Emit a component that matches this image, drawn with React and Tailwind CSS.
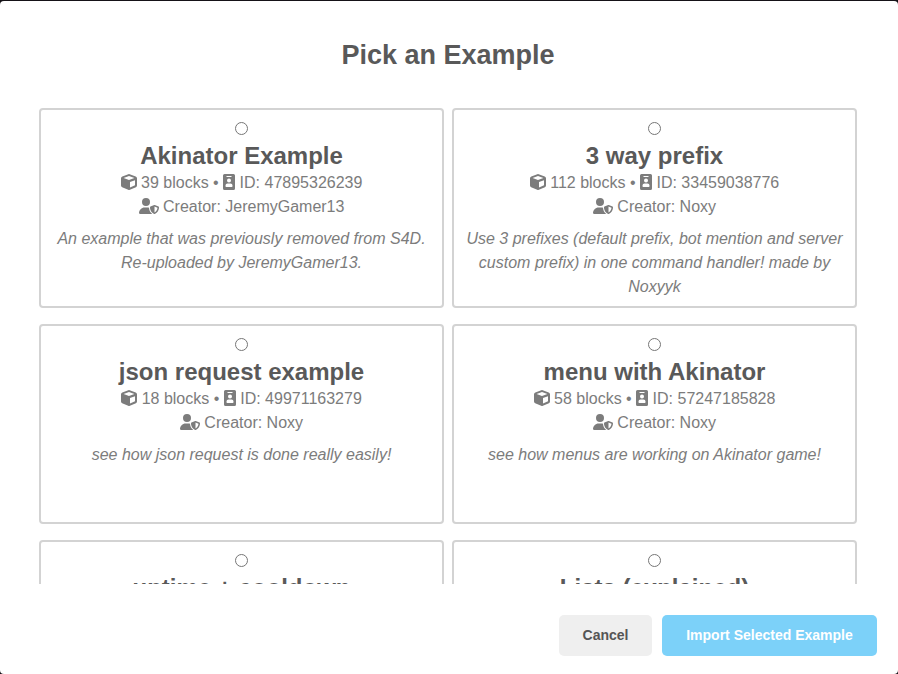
import { FaUserShield } from 'react-icons/fa6';

const examples = [
  { name: 'Akinator Example', blocks: 39, id: '47895326239', creator: 'JeremyGamer13', text: 'An example that was previously removed from S4D. Re-uploaded by JeremyGamer13.' },
  { name: '3 way prefix', blocks: 112, id: '33459038776', creator: 'Noxy', text: 'Use 3 prefixes (default prefix, bot mention and server custom prefix) in one command handler! made by Noxyyk' },
  { name: 'json request example', blocks: 18, id: '49971163279', creator: 'Noxy', text: 'see how json request is done really easily!' },
  { name: 'menu with Akinator', blocks: 58, id: '57247185828', creator: 'Noxy', text: 'see how menus are working on Akinator game!' },
  { name: 'uptime + cooldown' },
  { name: 'Lists (explained)' },
];

// Solid box with a light front-right face
function CubeIcon() {
  return (
    <svg viewBox="0 0 16 16" className="mb-0.5 h-4 w-4 shrink-0" fill="currentColor">
      <path fillRule="evenodd" d="M7.3.2a2 2 0 0 1 1.4 0l6 2.2A2 2 0 0 1 16 4.3v7.2a2 2 0 0 1-1.1 1.8l-6 2.5a2 2 0 0 1-1.7 0l-6-2.5A2 2 0 0 1 0 11.5V4.3a2 2 0 0 1 1.3-1.9zM8 2.1 2.6 4.1 8 6.1l5.4-2zM9 13.6l5-2.3V6.2L9 8z" />
    </svg>
  );
}

// Badge with a clip slot and a person cut out
function IdIcon() {
  return (
    <svg viewBox="0 0 12 16" className="mb-0.5 h-4 w-3 shrink-0" fill="currentColor">
      <path fillRule="evenodd" d="M1.5 0h9A1.5 1.5 0 0 1 12 1.5v13a1.5 1.5 0 0 1-1.5 1.5h-9A1.5 1.5 0 0 1 0 14.5v-13A1.5 1.5 0 0 1 1.5 0zM3.5 2v1h5V2zM6 4.5a2 2 0 1 0 0 4 2 2 0 0 0 0-4zM4.500 9.5A2 2 0 0 0 2.5 11.5v.7c0 .5.3.8.7.8h5.6c.4 0 .7-.3.7-.8v-.7a2 2 0 0 0-2-2z" />
    </svg>
  );
}

function Card({ item }) {
  return (
    <label className="flex h-[200px] flex-col items-center rounded-[4px] border-2 border-[#d3d3d3] px-[11px] pt-3 text-center">
      <input type="radio" name="example" className="m-0 h-[13px] w-[13px] shrink-0" />
      <h3 className="mt-[7px] text-2xl leading-7 font-bold whitespace-nowrap text-[#595959]">{item.name}</h3>
      {item.id && (
        <>
          <div className="mt-px flex h-6 items-center whitespace-pre">
            <CubeIcon /><span>{` ${item.blocks} blocks • `}</span><IdIcon /><span>{` ID: ${item.id}`}</span>
          </div>
          <div className="flex h-6 items-center whitespace-pre">
            <FaUserShield className="mb-0.5 h-4 w-5" /><span>{` Creator: ${item.creator}`}</span>
          </div>
          <p className="mt-2 leading-6 italic">{item.text}</p>
        </>
      )}
    </label>
  );
}

export default function App() {
  return (
    <div className="h-[674px] w-[898px] overflow-hidden bg-[#151217] pt-px font-['Liberation_Sans',Arial,sans-serif] text-base text-[#7c7c7c]">
      <div className="flex h-[673px] flex-col rounded-[4px] bg-white">
        <h2 className="pt-[38px] pr-[2px] text-center text-[27px] leading-8 font-bold text-[#595959]">Pick an Example</h2>
        <div className="mt-[37px] h-[476px] overflow-hidden pr-[41px] pl-[39px]">
          <div className="grid grid-cols-[405px_405px] gap-x-2 gap-y-4">
            {examples.map((item) => <Card key={item.name} item={item} />)}
          </div>
        </div>
        <div className="mt-[31px] flex justify-end gap-[10px] pr-[21px] text-[14px] font-bold">
          <button className="h-[41px] w-[93px] rounded-[5px] bg-[#efefef] text-[#555]">Cancel</button>
          <button className="h-[41px] w-[215px] rounded-[5px] bg-[#7cd1f9] text-white">Import Selected Example</button>
        </div>
      </div>
    </div>
  );
}
